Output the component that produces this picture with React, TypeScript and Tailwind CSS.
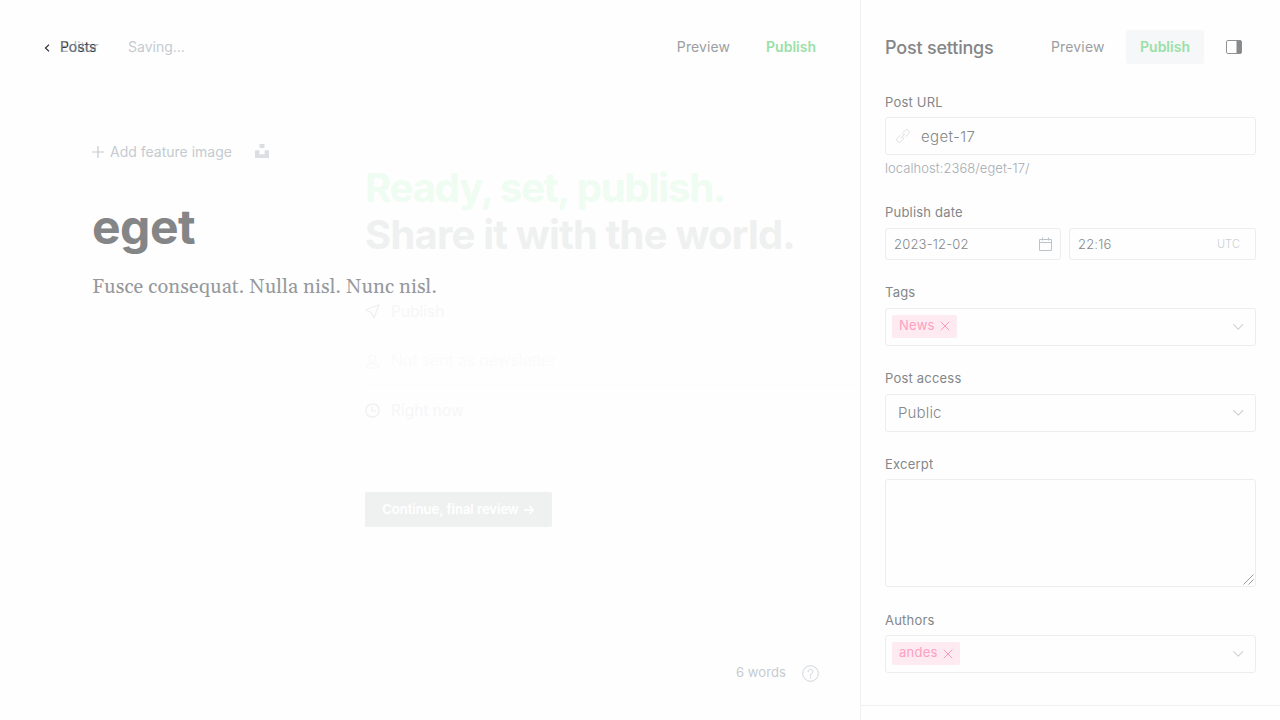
import type { ReactNode } from "react";

function Field({ label, className, children }: { label: string; className: string; children: ReactNode }) {
  return (
    <div className={className}>
      <div className="h-4 text-[13px] leading-4 tracking-[0.2px] text-[#848688]">{label}</div>
      {children}
    </div>
  );
}

function Chevron({ className }: { className: string }) {
  return (
    <svg className={className} width="12" height="8" viewBox="0 0 12 8" fill="none" stroke="currentColor" strokeWidth="1.1">
      <path d="M1.7 1.6 6.2 6.1l4.5-4.5" strokeLinecap="round" strokeLinejoin="round" />
    </svg>
  );
}

function TokenSelect({ token, className, crossClass }: { token: string; className: string; crossClass: string }) {
  return (
    <div className={`flex h-[38px] items-start rounded-[3px] border border-[#ededee] pl-[6px] pr-[11px] pt-[6px] ${className}`}>
      <div className="flex h-[23px] items-center rounded-[2px] bg-[#feebf2] pl-[7px] pr-[7px] text-[13px] leading-[22px] tracking-[0.25px] text-[#fda0c1]">
        <span className="-mt-[3px]">{token}</span>
        <svg className={crossClass} width="10" height="10" viewBox="0 0 10 10" stroke="#fd8fb6" strokeWidth="0.9" strokeLinecap="round">
          <path d="M1 1l8 8M9 1 1 9" />
        </svg>
      </div>
      <Chevron className="ml-auto mt-2 text-[#cdd2d7]" />
    </div>
  );
}

function SettingsPanel() {
  return (
    <aside className="h-full w-[420px] border-l border-[#f0f0f1] pt-[30px]">
      <div className="pl-6 pr-6">
        <div className="flex h-[34px] items-center">
          <h4 className="w-[166px] whitespace-nowrap pt-0.5 text-[18px] font-medium leading-6 tracking-[-0.2px] text-[#848688]">Post settings</h4>
          <span className="w-[75px] pb-px text-[14px] leading-5 tracking-[0.15px] text-[#9c9fa2]">Preview</span>
          <span className="flex h-[34px] w-[78px] items-center justify-center rounded-[3px] bg-[#f5f7f8] pb-0.5 text-[14px] font-semibold text-[#9be0a6]">Publish</span>
          <svg className="ml-[22px]" width="16" height="14" viewBox="0 0 16 14">
            <rect x="0.5" y="0.5" width="15" height="13" rx="1.4" fill="none" stroke="#929395" />
            <path d="M10.5 .5h4a1 1 0 0 1 1 1v11a1 1 0 0 1-1 1h-4z" fill="#88898b" />
          </svg>
        </div>

        <Field label="Post URL" className="mt-[30px]">
          <div className="mt-[7px] flex h-[38px] items-center rounded-[3px] border border-[#ededee] pl-[10px]">
            <svg width="14" height="14" viewBox="0 0 14 14" fill="none" stroke="#dcdee0" strokeWidth="0.9" strokeLinecap="round">
              <g transform="rotate(-45 7 7)">
                <path d="M5.4 4.6H1.2A1.9 1.9 0 0 0-.7 6.5v1a1.9 1.9 0 0 0 1.9 1.9h3.2a1.9 1.9 0 0 0 1.9-1.9" />
                <path d="M8.6 9.4h4.2a1.9 1.9 0 0 0 1.9-1.9v-1a1.9 1.9 0 0 0-1.9-1.9H9.6a1.9 1.9 0 0 0-1.9 1.9M4.6 7h4.8" />
              </g>
            </svg>
            <span className="ml-[11px] pt-0.5 text-[15px] font-light tracking-[0.35px] text-[#85888b]">eget-17</span>
          </div>
          <p className="mt-[5px] text-[13px] font-light leading-4 tracking-[0.05px] text-[#a5abb1]">localhost:2368/eget-17/</p>
        </Field>

        <Field label="Publish date" className="mt-7">
          <div className="mt-2 flex gap-2">
            <div className="flex h-8 w-[176px] items-center justify-between rounded-[3px] border border-[#ededee] pl-2 pr-2 text-[13px] font-light tracking-[0.2px] text-[#85888b]">
              <span className="pt-0.5">2023-12-02</span>
              <svg width="13" height="14" viewBox="0 0 13 14" fill="none" stroke="#bcc4ca">
                <path d="M.5 2.5h12v11H.5zM.5 5.5h12M3.5.5v3M9.5.5v3" />
              </svg>
            </div>
            <div className="flex h-8 w-[187px] items-center justify-between rounded-[3px] border border-[#ededee] pl-2 pr-[15px] text-[13px] font-light tracking-[0.2px] text-[#85888b]">
              <span className="pt-0.5">22:16</span>
              <span className="text-[11px] tracking-[0.1px] text-[#ccd0d4]">UTC</span>
            </div>
          </div>
        </Field>

        <Field label="Tags" className="mt-6">
          <TokenSelect token="News" className="mt-2" crossClass="ml-[5px] -mt-px" />
        </Field>

        <Field label="Post access" className="mt-6">
          <div className="mt-2 flex h-[38px] items-center justify-between rounded-[3px] border border-[#ededee] pl-3 pr-[11px] text-[15px] font-light tracking-[0.15px] text-[#85888b]">
            Public
            <Chevron className="text-[#cccdce]" />
          </div>
        </Field>

        <Field label="Excerpt" className="mt-6">
          <div className="mt-[7px] flex h-[108px] items-end justify-end rounded-[3px] border border-[#ededee]">
            <svg className="mb-px mr-px" width="11" height="11" viewBox="0 0 11 11" stroke="#939393" strokeWidth="0.9">
              <path d="M.5 10.5l10-10M5.5 10.5l5-5" />
            </svg>
          </div>
        </Field>

        <Field label="Authors" className="mt-[25px]">
          <TokenSelect token="andes" className="mt-[7px]" crossClass="ml-[5px] mt-px" />
        </Field>
      </div>
      <div className="mt-8 border-t border-[#f0f0f1]" />
    </aside>
  );
}

function PublishFlow() {
  return (
    <div className="absolute left-[365px] top-[164px] w-[495px]">
      <h1 className="whitespace-nowrap text-[40px] font-bold leading-[47px] tracking-[-0.8px] text-[#eff0f0]">
        <span className="block tracking-[-1.15px] text-[#effcf2]">Ready, set, publish.</span>
        <span className="block">Share it with the world.</span>
      </h1>
      <div className="mt-[43px] flex h-5 items-center gap-[11px] text-[15.5px] text-[#f6f6f7]">
        <svg width="15" height="15" viewBox="0 0 15 15" fill="none" stroke="#efefef" strokeWidth="1.2" strokeLinejoin="round">
          <path d="M14 .9.8 5.7l5.2 2.6L9 14z" />
        </svg>
        <span className="pt-0.5">Publish</span>
      </div>
      <div className="mt-[30px] flex h-5 items-center gap-[11px] text-[15.5px] text-[#fafafa]">
        <svg width="15" height="15" viewBox="0 0 15 15" fill="none" stroke="#f8f8f8" strokeWidth="1.2">
          <circle cx="7.5" cy="4.5" r="3.5" />
          <path d="M1.5 14v-1.5c0-2 2-2.7 3.5-2.7h5c1.5 0 3.5.7 3.5 2.7V14z" />
        </svg>
        <span className="font-light tracking-[0.22px]">Not sent as newsletter</span>
      </div>
      <div className="mt-[14px] h-px bg-[#fcfcfc]" />
      <div className="mt-[14px] flex h-5 items-center gap-[11px] text-[15.5px] text-[#f6f6f7]">
        <svg width="15" height="15" viewBox="0 0 15 15" fill="none" stroke="#efefef" strokeWidth="1.2">
          <circle cx="7.5" cy="7.5" r="6.7" />
          <path d="M7 3.5V8h4" />
        </svg>
        <span className="pt-px">Right now</span>
      </div>
      <div className="mt-[72px] flex h-[35px] w-[187px] items-center justify-center gap-1 whitespace-nowrap rounded-[2px] bg-[#eff1f1] text-[13px] font-semibold text-white">
        Continue, final review
        <svg width="12" height="10" viewBox="0 0 12 10" fill="none" stroke="white" strokeWidth="1.5">
          <path d="M1 5h9M6.5 1.3 10.2 5 6.5 8.7" />
        </svg>
      </div>
    </div>
  );
}

export default function App() {
  return (
    <div className="relative flex h-[720px] w-[1280px] overflow-hidden bg-[#fefefe] font-['Inter',sans-serif]">
      <PublishFlow />
      <main className="flex h-full w-[860px] flex-col">
        <header className="mt-[30px] flex h-[34px] items-center pb-px pl-11 pr-11 text-[14px] leading-5">
          <svg className="mt-[3px]" width="6" height="8" viewBox="0 0 6 8" fill="none" stroke="#303236" strokeWidth="1.3">
            <path d="M5 .6 1.5 4 5 7.4" />
          </svg>
          <div className="relative ml-[10px] w-[68px] text-[#35383c]">
            Posts
            <span className="absolute left-0 top-0 text-[#8e969d] opacity-70">Editor</span>
          </div>
          <span className="text-[#c5cbd0]">Saving...</span>
          <span className="ml-auto tracking-[0.1px] text-[#9c9fa2]">Preview</span>
          <span className="ml-9 font-semibold text-[#9be0a6]">Publish</span>
        </header>

        <div className="flex-1 pl-[92px] pt-[78px]">
          <div className="flex h-5 items-center text-[14px] leading-5 text-[#c5cbd0]">
            <svg width="12" height="12" viewBox="0 0 12 12" stroke="#c5cbd0" strokeWidth="1.2">
              <path d="M6 0v12M0 6h12" />
            </svg>
            <span className="-mt-px ml-[6px]">Add feature image</span>
            <svg className="-mt-[2px] ml-[23px]" width="14" height="14" viewBox="0 0 14 14" fill="#dcdfe2">
              <path d="M4.5 0h5v4h-5zM0 6.2h4.4v4h5.2v-4H14V14H0z" />
            </svg>
          </div>
          <h2 className="mt-[37px] text-[48px] font-bold leading-[56px] tracking-[-0.5px] text-[#848587]">eget</h2>
          <p className="mt-4 whitespace-nowrap font-[Gelasio,Georgia,'Liberation_Serif',serif] text-[20px] leading-8 tracking-[0.1px] text-[#96999c]">
            Fusce consequat. Nulla nisl. Nunc nisl.
          </p>
        </div>

        <footer className="mb-[35px] flex h-6 items-center justify-end pr-[41.5px] text-[13px] tracking-[0.1px] text-[#c5cbd0]">
          6 words
          <svg className="ml-[15.5px]" width="17" height="17" viewBox="0 0 17 17" fill="none" stroke="#d0d4d9">
            <circle cx="8.5" cy="8.5" r="7.8" />
            <path d="M6 6.6a2.4 2.4 0 1 1 3.8 2c-.9.5-1.3.9-1.3 1.9M8.5 12v1.1" strokeLinecap="round" />
          </svg>
        </footer>
      </main>
      <SettingsPanel />
    </div>
  );
}
